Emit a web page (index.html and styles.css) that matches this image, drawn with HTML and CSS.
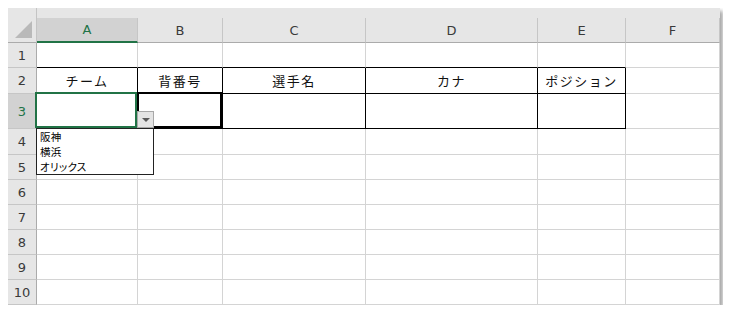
FILE: index.html
```html
<!DOCTYPE html>
<html lang="ja">
<head>
  <meta charset="UTF-8">
  <title>入力規則リスト</title>
  <link rel="stylesheet" href="styles.css">
</head>
<body>
  <div class="sheet">
    <div class="top-strip"></div>
    <div class="grid">
      <!-- column headers -->
      <div class="corner">
        <svg width="18" height="18" viewBox="0 0 18 18"><polygon points="17,0 17,17 0,17" fill="#b9b9b9"/></svg>
      </div>
      <div class="col-head active">A</div>
      <div class="col-head">B</div>
      <div class="col-head">C</div>
      <div class="col-head">D</div>
      <div class="col-head">E</div>
      <div class="col-head">F</div>

      <!-- row 1 -->
      <div class="row-head">1</div>
      <div class="cell top-line"></div>
      <div class="cell top-line"></div>
      <div class="cell top-line"></div>
      <div class="cell top-line"></div>
      <div class="cell top-line"></div>
      <div class="cell"></div>

      <!-- row 2 -->
      <div class="row-head">2</div>
      <div class="cell boxed">チーム</div>
      <div class="cell boxed">背番号</div>
      <div class="cell boxed">選手名</div>
      <div class="cell boxed">カナ</div>
      <div class="cell boxed">ポジション</div>
      <div class="cell"></div>

      <!-- row 3 -->
      <div class="row-head active">3</div>
      <div class="cell boxed selected">
        <span class="drop-btn"></span>
        <div class="drop-list">
          <div>阪神</div>
          <div>横浜</div>
          <div>オリックス</div>
        </div>
      </div>
      <div class="cell boxed thick"></div>
      <div class="cell boxed"></div>
      <div class="cell boxed"></div>
      <div class="cell boxed"></div>
      <div class="cell"></div>

      <!-- rows 4-10 -->
      <div class="row-head">4</div>
      <div class="cell"></div><div class="cell"></div><div class="cell"></div><div class="cell"></div><div class="cell"></div><div class="cell"></div>
      <div class="row-head">5</div>
      <div class="cell"></div><div class="cell"></div><div class="cell"></div><div class="cell"></div><div class="cell"></div><div class="cell"></div>
      <div class="row-head">6</div>
      <div class="cell"></div><div class="cell"></div><div class="cell"></div><div class="cell"></div><div class="cell"></div><div class="cell"></div>
      <div class="row-head">7</div>
      <div class="cell"></div><div class="cell"></div><div class="cell"></div><div class="cell"></div><div class="cell"></div><div class="cell"></div>
      <div class="row-head">8</div>
      <div class="cell"></div><div class="cell"></div><div class="cell"></div><div class="cell"></div><div class="cell"></div><div class="cell"></div>
      <div class="row-head">9</div>
      <div class="cell"></div><div class="cell"></div><div class="cell"></div><div class="cell"></div><div class="cell"></div><div class="cell"></div>
      <div class="row-head">10</div>
      <div class="cell"></div><div class="cell"></div><div class="cell"></div><div class="cell"></div><div class="cell"></div><div class="cell"></div>
    </div>
  </div>
</body>
</html>
```

FILE: styles.css
```css
body {
  margin: 8px;
  background-color: #fff;
  font-family: "Noto Sans CJK JP", sans-serif;
}

.sheet {
  width: 712px;
  background-color: #fff;
  box-shadow: 3px 3px 4px rgba(0, 0, 0, 0.35);
}

.top-strip {
  height: 10px;
  background-color: #e6e6e6;
}

.grid {
  display: grid;
  grid-template-columns: 29px 101px 85px 143px 172px 88px 94px;
  grid-template-rows: 25px 25px 26px 35px 26px repeat(6, 25px);
}

.grid > div {
  box-sizing: border-box;
}

/* headers */
.corner {
  background-color: #e6e6e6;
  border-right: 1px solid #c4c4c4;
  border-bottom: 1px solid #ababab;
  display: flex;
  justify-content: flex-end;
  align-items: flex-end;
  padding: 0 3px 3px 0;
  margin-top: -10px;
}

.corner svg {
  display: block;
}

.col-head,
.row-head {
  background-color: #e6e6e6;
  color: #3a3a3a;
  font-family: "DejaVu Sans", sans-serif;
  font-size: 13px;
  display: flex;
  justify-content: center;
  align-items: center;
}

.col-head {
  border-right: 1px solid #c6c6c6;
  border-bottom: 1px solid #ababab;
}

.col-head:last-child {
  border-right-color: #b5b5b5;
}

.row-head {
  border-right: 1px solid #ababab;
  border-bottom: 1px solid #c6c6c6;
}

.col-head.active {
  background-color: #d2d2d2;
  color: #217346;
  border-bottom: 2px solid #217346;
}

.row-head.active {
  background-color: #d2d2d2;
  color: #217346;
}

/* cells */
.cell {
  position: relative;
  border-right: 1px solid #d4d4d4;
  border-bottom: 1px solid #d4d4d4;
  font-size: 13px;
  letter-spacing: 1.5px;
  color: #111;
  display: flex;
  justify-content: center;
  align-items: center;
}

.cell.top-line {
  border-bottom-color: #000;
}

.cell.boxed {
  border-right-color: #000;
  border-bottom-color: #000;
}

.cell.thick::after {
  content: "";
  position: absolute;
  top: -2px;
  left: -1px;
  right: 0;
  bottom: 0;
  border: 2px solid #000;
}

.cell.selected::after {
  content: "";
  position: absolute;
  top: -2px;
  left: -2px;
  right: 0;
  bottom: 0;
  border: 2px solid #217346;
  z-index: 2;
}

.drop-btn {
  position: absolute;
  left: 100px;
  top: 17px;
  width: 17px;
  height: 17px;
  box-sizing: border-box;
  background-color: #e4e4e4;
  border: 1px solid #a8a8a8;
  z-index: 3;
}

.drop-btn::after {
  content: "";
  position: absolute;
  left: 4px;
  top: 6px;
  border-left: 4px solid transparent;
  border-right: 4px solid transparent;
  border-top: 4px solid #5a5a5a;
}

.drop-list {
  position: absolute;
  left: -1px;
  top: 34px;
  width: 118px;
  height: 47px;
  box-sizing: border-box;
  background-color: #fff;
  border: 1px solid #222;
  padding: 0 0 0 3px;
  font-size: 10.5px;
  line-height: 15px;
  letter-spacing: 0.3px;
  font-feature-settings: "palt";
  color: #000;
  z-index: 1;
}
```
